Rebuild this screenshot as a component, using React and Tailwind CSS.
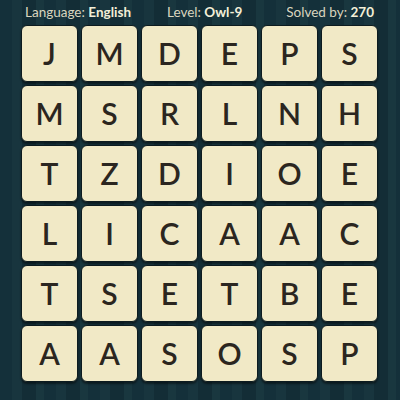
const rows = ["JMDEPS", "MSRLNH", "TZDIOE", "LICAAC", "TSETBE", "AASOSP"];

export default function App() {
  return (
    <div
      className="w-[400px] h-[400px] overflow-hidden bg-[#163139] bg-[repeating-linear-gradient(90deg,#14303a_0px,#14303a_12px,#18353e_12px,#18353e_22px,#132d36_22px,#132d36_36px,#19373f_36px,#19373f_44px)]"
      style={{ fontFamily: "Lato, 'Noto Sans', sans-serif" }}
    >
      <div className="h-[24px] flex items-center text-[13.5px] text-[#d9d5bf] pl-[25px] pr-[26px]">
        <span>
          Language: <span className="font-bold text-[#f3efd8]">English</span>
        </span>
        <span className="ml-[36px]">
          Level: <span className="font-bold text-[#f3efd8]">Owl-9</span>
        </span>
        <span className="ml-auto">
          Solved by: <span className="font-bold text-[#f3efd8]">270</span>
        </span>
      </div>
      <div className="grid grid-cols-6 gap-[3px] w-[357px] ml-[21px] mt-[1px]">
        {rows.join("").split("").map((ch, i) => (
          <div
            key={i}
            className="h-[57px] rounded-[6px] bg-[#f1e9c6] border border-[#0d1b1f] shadow-[0_2px_2px_rgba(0,0,0,0.45)] flex items-center justify-center text-[30px] font-semibold text-[#2b2620]"
          >
            {ch}
          </div>
        ))}
      </div>
    </div>
  );
}
